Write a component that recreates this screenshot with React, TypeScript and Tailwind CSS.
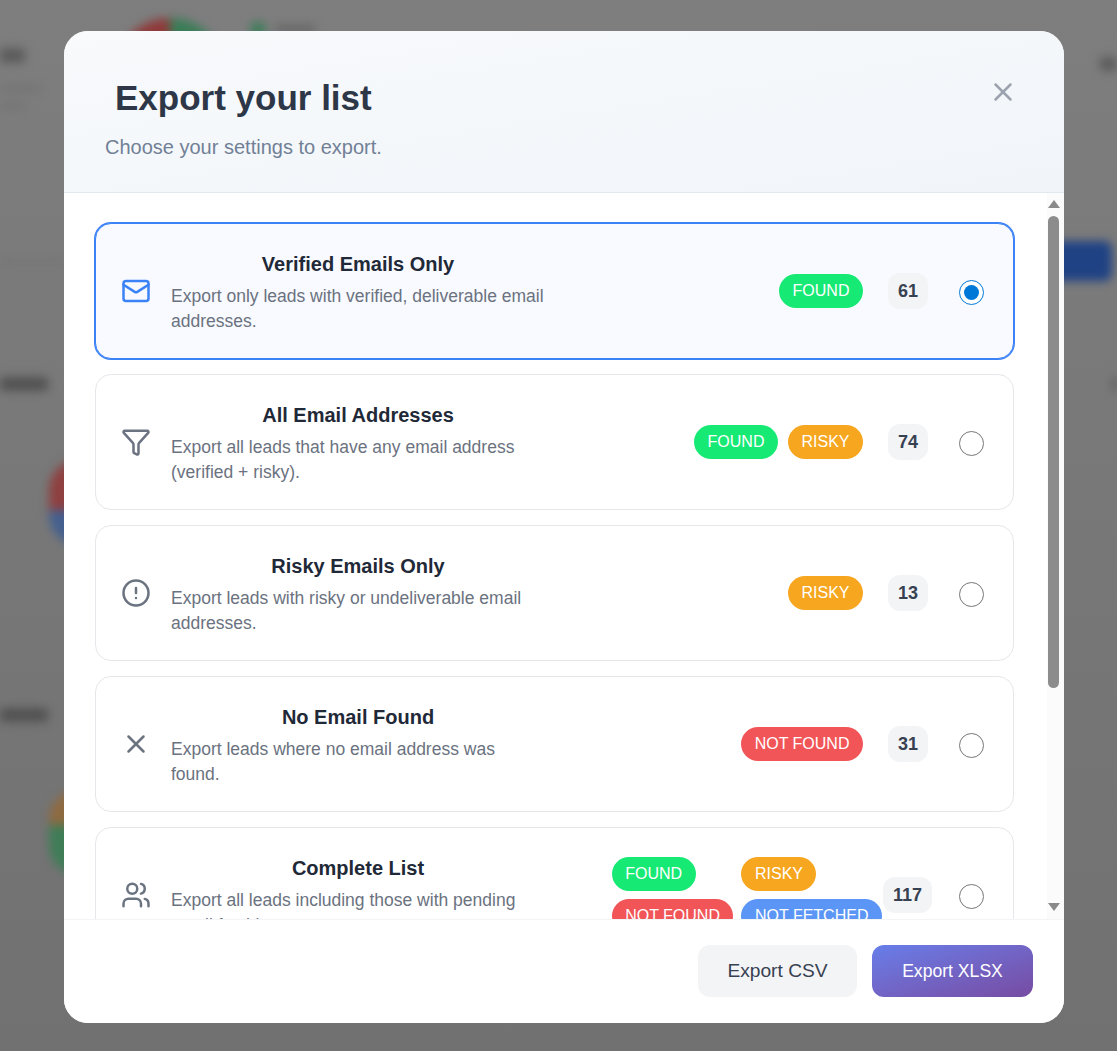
import { CircleAlert, Filter, Mail, Users, X } from "lucide-react";
import type { ReactNode } from "react";

const badgeColors: Record<string, string> = {
  FOUND: "bg-[#17e975]",
  RISKY: "bg-[#f6a61f]",
  "NOT FOUND": "bg-[#f25558]",
  "NOT FETCHED": "bg-[#5b96f6]",
};

type Option = {
  title: string;
  desc: string;
  icon: ReactNode;
  badges: string[];
  count: number;
  selected?: boolean;
};

const grayIcon = "text-[#6b7280]";

const options: Option[] = [
  {
    title: "Verified Emails Only",
    desc: "Export only leads with verified, deliverable email addresses.",
    icon: <Mail size={30} className="text-[#3b82f6]" />,
    badges: ["FOUND"],
    count: 61,
    selected: true,
  },
  {
    title: "All Email Addresses",
    desc: "Export all leads that have any email address (verified + risky).",
    icon: <Filter size={30} className={grayIcon} />,
    badges: ["FOUND", "RISKY"],
    count: 74,
  },
  {
    title: "Risky Emails Only",
    desc: "Export leads with risky or undeliverable email addresses.",
    icon: <CircleAlert size={30} className={grayIcon} />,
    badges: ["RISKY"],
    count: 13,
  },
  {
    title: "No Email Found",
    desc: "Export leads where no email address was found.",
    icon: <X size={30} className={grayIcon} />,
    badges: ["NOT FOUND"],
    count: 31,
  },
  {
    title: "Complete List",
    desc: "Export all leads including those with pending email fetching.",
    icon: <Users size={30} className={grayIcon} />,
    badges: ["FOUND", "RISKY", "NOT FOUND", "NOT FETCHED"],
    count: 117,
  },
];

function Badge({ label }: { label: string }) {
  return (
    <span
      className={`inline-flex h-[34px] items-center justify-self-start rounded-[17px] px-[13.5px] text-[16px] whitespace-nowrap text-white ${badgeColors[label]}`}
    >
      {label}
    </span>
  );
}

function OptionCard({ option }: { option: Option }) {
  const many = option.badges.length > 2;
  return (
    <div
      className={`flex h-[136px] shrink-0 items-center rounded-2xl border pr-[29px] pl-[25px] ${
        option.selected
          ? "border-[#3b82f6] bg-[#f8faff] ring-1 ring-[#3b82f6]"
          : "border-[#e5e7eb] bg-white"
      }`}
    >
      <div className="flex w-[30px] shrink-0 justify-center">{option.icon}</div>
      <div className="ml-[20px] w-[376px] shrink-0 pt-[2px]">
        <h3 className="w-[374px] text-center text-[20px] leading-[26px] font-semibold text-[#1f2937]">
          {option.title}
        </h3>
        <p className="mt-[7px] text-[17.5px] leading-[25px] text-[#6b7280]">{option.desc}</p>
      </div>

      <div className="ml-auto flex items-center">
        {many ? (
          <div className="grid grid-cols-[auto_auto] gap-2">
            {option.badges.map((b) => (
              <Badge key={b} label={b} />
            ))}
          </div>
        ) : (
          <div className="flex gap-[10px]">
            {option.badges.map((b) => (
              <Badge key={b} label={b} />
            ))}
          </div>
        )}
        <span
          className={`flex h-[36px] items-center rounded-xl bg-[#f3f4f6] px-[10px] text-[18px] font-bold text-[#374151] ${
            many ? "ml-[1px]" : "ml-[25px]"
          }`}
        >
          {option.count}
        </span>
        <input
          type="radio"
          name="export-type"
          readOnly
          checked={!!option.selected}
          className={`mt-[2px] h-[25px] w-[25px] accent-[#0078d7] ${many ? "ml-[27px]" : "ml-[31px]"}`}
        />
      </div>
    </div>
  );
}

/* 뒤쪽 페이지: 흐리게 보이는 배경 */
function Backdrop() {
  return (
    <div className="absolute inset-0 overflow-hidden bg-[#7a7a7a]">
      <div className="absolute inset-0 bg-gradient-to-b from-[#7e7e7e] to-[#717171]" />
      <div className="absolute inset-0 blur-[5px]">
        {/* top pie and legend */}
        <div className="absolute top-[18px] left-[115px] h-[110px] w-[55px] rounded-l-full bg-[#8f3a3a]" />
        <div className="absolute top-[18px] left-[170px] h-[110px] w-[55px] rounded-r-full bg-[#3a7d57]" />
        <div className="absolute top-[22px] left-[250px] h-[14px] w-[16px] rounded-full bg-[#3a7d57]" />
        <div className="absolute top-[25px] left-[275px] h-[8px] w-[40px] bg-[#666666]" />
        <div className="absolute top-[48px] left-0 h-[15px] w-[25px] rounded bg-[#5c5c5c]" />
        <div className="absolute top-[86px] left-0 h-[6px] w-[40px] bg-[#737373]" />
        <div className="absolute top-[103px] left-0 h-[6px] w-[25px] bg-[#737373]" />
        <div className="absolute top-[57px] left-[1100px] h-[14px] w-[17px] rounded bg-[#5c5c5c]" />
        {/* section titles */}
        <div className="absolute top-[260px] left-0 h-[4px] w-[64px] bg-[#747474]" />
        <div className="absolute top-[377px] left-0 h-[14px] w-[48px] rounded bg-[#525252]" />
        <div className="absolute top-[708px] left-0 h-[14px] w-[48px] rounded bg-[#525252]" />
        <div className="absolute top-[377px] left-[1112px] h-[14px] w-[5px] rounded bg-[#5c5c5c]" />
        {/* lower pies */}
        <div className="absolute top-[460px] left-[49px] h-[50px] w-[30px] rounded-tl-full bg-[#8f4040]" />
        <div className="absolute top-[510px] left-[49px] h-[35px] w-[30px] rounded-bl-full bg-[#44608f]" />
        <div className="absolute top-[790px] left-[49px] h-[35px] w-[30px] rounded-tl-full bg-[#8f6a40]" />
        <div className="absolute top-[825px] left-[49px] h-[50px] w-[30px] rounded-bl-full bg-[#3f7d57]" />
        {/* blue button */}
        <div className="absolute top-[241px] left-[1040px] h-[40px] w-[72px] rounded-lg bg-[#1f4284]" />
      </div>
    </div>
  );
}

function Scrollbar() {
  return (
    <div className="absolute top-0 right-0 bottom-0 flex w-[17px] flex-col items-center bg-[#fbfbfb] pr-[4px]">
      <div className="mt-[7px] h-0 w-0 border-x-[6.5px] border-b-[8px] border-x-transparent border-b-[#8a8a8a]" />
      <div className="mt-[8px] h-[472px] w-[11px] rounded-full bg-[#8c8c8c]" />
      <div className="mt-auto mb-[8px] h-0 w-0 border-x-[6.5px] border-t-[8px] border-x-transparent border-t-[#8a8a8a]" />
    </div>
  );
}

export default function App() {
  return (
    <div className="relative h-[1051px] overflow-hidden pt-[31px] pl-[64px] font-['Liberation_Sans',Arial,sans-serif]">
      <Backdrop />

      <div className="relative flex h-[992px] w-[1000px] flex-col overflow-hidden rounded-3xl bg-white">
        {/* Header */}
        <div className="flex h-[162px] shrink-0 items-start justify-between border-b border-[#e2e8f0] bg-gradient-to-br from-[#f8fafc] to-[#f1f5f9] pt-[42px] pr-[46px] pl-[41px]">
          <div>
            <h2 className="ml-[10px] text-[35px] leading-[50px] font-bold text-[#2d3748]">
              Export your list
            </h2>
            <p className="mt-[11px] text-[20px] leading-[26px] text-[#718096]">
              Choose your settings to export.
            </p>
          </div>
          <X size={30} className="mt-[4px] text-[#9ca3af]" />
        </div>

        {/* Options */}
        <div className="relative flex min-h-0 flex-1 flex-col gap-[15px] overflow-hidden pt-[30px] pr-[50px] pl-[31px]">
          {options.map((o) => (
            <OptionCard key={o.title} option={o} />
          ))}
          <Scrollbar />
        </div>

        {/* Footer */}
        <div className="flex h-[104px] shrink-0 items-start justify-end gap-[15px] border-t border-[#f3f4f6] bg-white pt-[25px] pr-[31px]">
          <button className="h-[52px] w-[159px] rounded-xl bg-[#f3f4f6] text-[19.2px] text-[#374151]">
            Export CSV
          </button>
          <button className="h-[52px] w-[161px] rounded-xl bg-gradient-to-br from-[#667eea] to-[#764ba2] text-[17.6px] text-white">
            Export XLSX
          </button>
        </div>
      </div>
    </div>
  );
}
